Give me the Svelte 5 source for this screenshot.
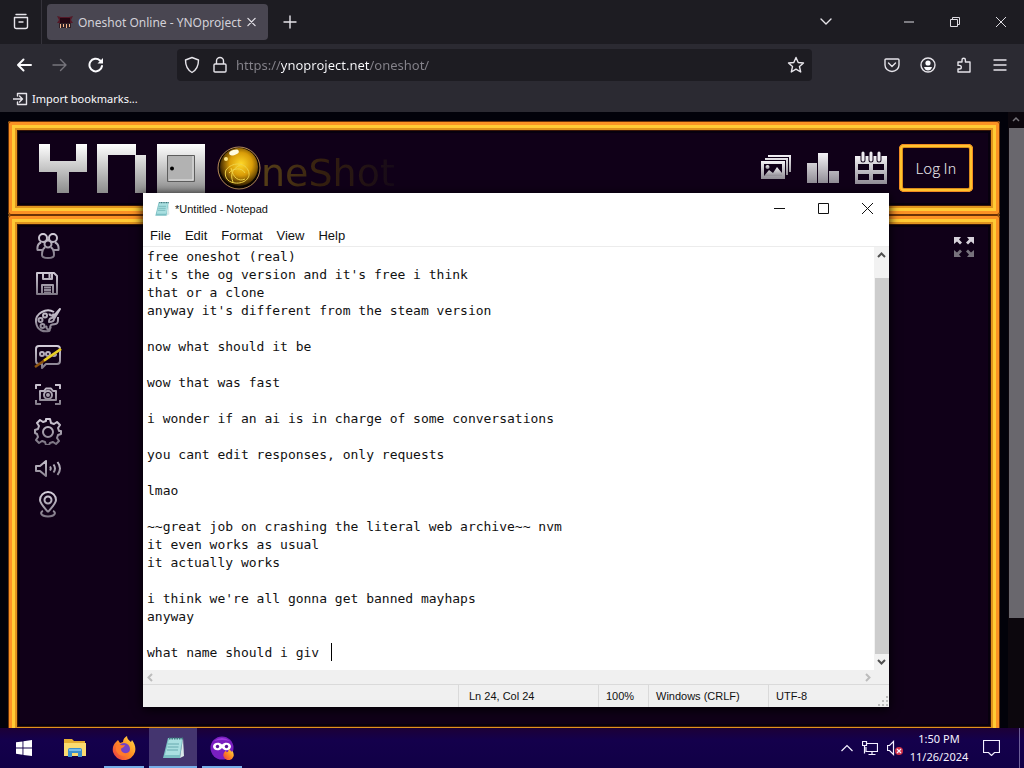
<script>
  const lines = [
    'free oneshot (real)',
    "it's the og version and it's free i think",
    'that or a clone',
    "anyway it's different from the steam version",
    '',
    'now what should it be',
    '',
    'wow that was fast',
    '',
    'i wonder if an ai is in charge of some conversations',
    '',
    'you cant edit responses, only requests',
    '',
    'lmao',
    '',
    '~~great job on crashing the literal web archive~~ nvm',
    'it even works as usual',
    'it actually works',
    '',
    "i think we're all gonna get banned mayhaps",
    'anyway',
    '',
    'what name should i giv '
  ];
  let note = $state(lines.join('\n'));
  let url = $state('https://ynoproject.net/oneshot/');

  const menus = ['File', 'Edit', 'Format', 'View', 'Help'];
  const status = ['', 'Ln 24, Col 24', '100%', 'Windows (CRLF)', 'UTF-8'];

  const tools = [
    {
      name: 'Players',
      d: 'M5 6a4 4 0 1 0 8 0a4 4 0 1 0-8 0M15 6a4 4 0 1 0 8 0a4 4 0 1 0-8 0M10.500 12a3.500 3.500 0 1 0 7 0a3.500 3.500 0 1 0-7 0M8 18H3.500C3 14 4.500 11.500 7 10.500M20 18h4.500C25 14 23.500 11.500 21 10.500M11 15.500C8 17 8 20 8 23q0 3 6 3t6-3c0-3 0-6-3-7.500'
    },
    {
      name: 'Save',
      d: 'M3 4h17l3 3v18H3zM9 4v6h9V4M15.500 5v4M8 25v-9h11v9M10 18.500h7M10 21h7M10 23.500h7'
    },
    {
      name: 'Palette',
      d: 'M20 6C12 1 1 8 2 16c1 9 8 10 13 9c2-1 0-4 2-6c3-2 7 1 7-5V11M26 3l-8 9c-2 0-3 2-3 4c3 0 5-1 5-3zM9 9.500a2 2 0 1 0 4 0a2 2 0 1 0-4 0M15.500 7.500a2 2 0 1 0 4 0M4.500 14a2 2 0 1 0 4 0a2 2 0 1 0-4 0M6.500 20a2 2 0 1 0 4 0a2 2 0 1 0-4 0M13 20a2 2 0 1 0 3 0'
    },
    {
      name: 'Chat',
      d: 'M5 3h18q3 0 3 3v12q0 3-3 3H12l-4 4v-4H5q-3 0-3-3V6q0-3 3-3M6 11a2 2 0 1 0 4 0a2 2 0 1 0-4 0M12 11a2 2 0 1 0 4 0a2 2 0 1 0-4 0M18 11a2 2 0 1 0 4 0',
      slash: true
    },
    {
      name: 'Screenshot',
      d: 'M2 9V5h5M21 5h5v4M2 20v4h5M21 24h5v-4M6 20V11h4l2-2.500h5L19 11h3v9zM10 15a4 4 0 1 0 8 0a4 4 0 1 0-8 0M13 15a1 1 0 1 0 2 0a1 1 0 1 0-2 0'
    },
    {
      name: 'Settings',
      d: 'M12 2h4l1 4 3 1 3-2 3 3-2 3 1 3 2 0v3l-3 1-1 3 2 3-3 3-3-2-3 1-1 2h-3l-1-3-3-1-3 2-3-3 2-3-1-3-2-1v-3l3-1 1-3-2-3 3-3 3 2 3-1zM9 15a5 5 0 1 0 10 0a5 5 0 1 0-10 0'
    },
    {
      name: 'Sound',
      d: 'M2 12h4l6-5v15l-6-5H2zM16 12.500q1.500 2 0 4M19.500 10.500q3 4 0 8M23.500 8q5 6.500 0 13'
    },
    {
      name: 'Locations',
      d: 'M14 21C8 14 6 12 6 9a8 8 0 0 1 16 0c0 3-2 5-8 12M10.500 9a3.500 3.500 0 1 0 7 0a3.500 3.500 0 1 0-7 0M9 20c-3 1-3 5 5 5.500c8-.5 8-4.500 5-5.500'
    }
  ];
</script>

<svg class="defs" aria-hidden="true">
  <defs>
    <linearGradient id="silver" x1="0" y1="0" x2="0" y2="1">
      <stop offset="0" stop-color="#f4f2f6" />
      <stop offset="1" stop-color="#918d96" />
    </linearGradient>
    <linearGradient id="toolGrad" gradientUnits="userSpaceOnUse" x1="0" y1="0" x2="0" y2="28">
      <stop offset="0" stop-color="#dcd6e2" />
      <stop offset="1" stop-color="#77707e" />
    </linearGradient>
    <linearGradient id="logoGrad" gradientUnits="userSpaceOnUse" x1="0" y1="0" x2="0" y2="49">
      <stop offset="0" stop-color="#ffffff" />
      <stop offset="1" stop-color="#8c8c8c" />
    </linearGradient>
    <radialGradient id="orb" cx=".55" cy=".42" r=".6">
      <stop offset="0" stop-color="#ffd92a" />
      <stop offset=".5" stop-color="#d99c08" />
      <stop offset="1" stop-color="#241300" />
    </radialGradient>
    <linearGradient id="fire" x1="1" y1="0" x2="0" y2="1">
      <stop offset="0" stop-color="#ffe34a" />
      <stop offset=".5" stop-color="#ff8c20" />
      <stop offset="1" stop-color="#e8304c" />
    </linearGradient>
  </defs>
</svg>

{#snippet pad(size)}
  <svg width={size} height={size} viewBox="0 0 24 24" aria-hidden="true">
    <path d="M7 2h15l-3 20H2z" fill="#7cc0c4" />
    <path d="M8 3h13l-2.500 16H4z" fill="#a9dfe0" />
    <path d="M7 8h11M6.500 11h11M6 14h11" stroke="#67a9ae" fill="none" />
    <path d="M22 2l1 18-4 2z" fill="#d8e8e8" />
    <path d="M8 2.500h14" stroke="#40777c" stroke-width="2" stroke-dasharray="1.500 1" />
  </svg>
{/snippet}

{#snippet firefox(size)}
  <svg width={size} height={size} viewBox="0 0 24 24" aria-hidden="true">
    <path d="M6 4l2 3 3-1c0-3 2-5 4-6 0 3 2 4 4 6l1-2c3 4 4 8 3 12a11.500 11.500 0 0 1-22 0C0 11 2 8 4 6z" fill="url(#fire)" />
    <circle cx="12" cy="13" r="6" fill="#7442c8" />
    <path d="M4 10c3-3 5 0 9-1-1 3-3 2-4 4 0 4 5 6 9 2-1 6-12 7-14-1z" fill="#ff7a2c" />
  </svg>
{/snippet}

<div class="desktop">
  <main class="browser">
    <div class="tabs">
      <button class="view" aria-label="Firefox View">
        <svg width="18" height="18" viewBox="0 0 18 18" class="line"><path d="M4 1.500h10M2.500 4.500h13v9q0 2-2 2h-9q-2 0-2-2zM7 9h4" /></svg>
      </button>
      <div class="tab">
        <svg width="16" height="16" viewBox="0 0 16 16" aria-hidden="true">
          <path d="M0 2l4 1h8l4-1-2 4 2 3H0l2-3z" fill="#541827" />
          <path d="M3 4h10v5H3z" fill="#240712" />
          <path d="M2 9h12v5H2z" fill="#302026" />
          <path d="M3 10h1v4H3zM6 10h1v3H6zM9 10h1v4H9zM12 10h1v3h-1z" fill="#f4b68b" />
        </svg>
        <span class="tab-title">Oneshot Online - YNOproject</span>
        <button class="close" aria-label="Close tab">
          <svg width="10" height="10" viewBox="0 0 10 10" class="line"><path d="M1 1l8 8M9 1l-8 8" /></svg>
        </button>
      </div>
      <button class="new" aria-label="New tab">
        <svg width="14" height="14" viewBox="0 0 14 14" class="line"><path d="M7 1v12M1 7h12" /></svg>
      </button>
      <button class="all" aria-label="List all tabs">
        <svg width="12" height="8" viewBox="0 0 12 8" class="line"><path d="M1 1l5 5 5-5" /></svg>
      </button>
      <div class="winctl">
        <button aria-label="Minimize"><svg width="10" height="10" viewBox="0 0 10 10" class="thin"><path d="M0 5h10" /></svg></button>
        <button aria-label="Restore"><svg width="10" height="10" viewBox="0 0 10 10" class="thin"><path d="M.5 2.500h7v7h-7zM2.500 2.500v-2h7v7h-2" /></svg></button>
        <button aria-label="Close"><svg width="10" height="10" viewBox="0 0 10 10" class="thin"><path d="M0 0l10 10M10 0L0 10" /></svg></button>
      </div>
    </div>

    <div class="nav">
      <div class="history">
        <button aria-label="Back"><svg width="16" height="16" viewBox="0 0 16 16" class="line bold"><path d="M15 8H2M7.500 2.500L2 8l5.500 5.500" /></svg></button>
        <button aria-label="Forward" disabled><svg width="16" height="16" viewBox="0 0 16 16" class="line"><path d="M1 8h13M8.500 2.500L14 8l-5.500 5.500" /></svg></button>
        <button aria-label="Reload"><svg width="16" height="16" viewBox="0 0 16 16" class="line bold"><path d="M14 9a6.300 6.300 0 1 1-2-5.600L14 5" /><path d="M15 1v5.500H9.500z" fill="#fbfbfe" stroke="none" /></svg></button>
      </div>
      <div class="urlbar">
        <svg width="16" height="18" viewBox="0 0 16 18" class="line shield"><path d="M8 1.500l6.500 2.500c0 6-2 10-6.500 12.500C3.500 14 1.500 10 1.500 4z" /></svg>
        <svg width="14" height="18" viewBox="0 0 14 18" class="line"><path d="M2 8h10q1 0 1 1v6q0 1-1 1H2q-1 0-1-1V9q0-1 1-1M3.500 8V5a3.500 3.500 0 0 1 7 0v3" /></svg>
        <input aria-label="Address" bind:value={url} spellcheck="false" />
        <button aria-label="Bookmark this page"><svg width="18" height="18" viewBox="0 0 18 18" class="line"><path d="M9 1.500l2.200 5 5.300.5-4 3.600 1.200 5.400L9 13.200 4.300 16l1.200-5.400-4-3.600 5.300-.5z" /></svg></button>
      </div>
      <div class="actions">
        <button aria-label="Pocket"><svg width="16" height="16" viewBox="0 0 16 16" class="line"><path d="M2 2h12q1 0 1 1v5a7 6.500 0 0 1-14 0V3q0-1 1-1M4.500 6L8 9.500 11.500 6" /></svg></button>
        <button aria-label="Account"><svg width="16" height="16" viewBox="0 0 16 16" class="line"><circle cx="8" cy="8" r="7" /><circle cx="8" cy="6" r="2.600" fill="#fbfbfe" stroke="none" /><path d="M4 10h8q-1 3.500-4 3.500T4 10" fill="#fbfbfe" stroke="none" /></svg></button>
        <button aria-label="Extensions"><svg width="16" height="16" viewBox="0 0 16 16" class="line"><path d="M2 5h4V3a1.700 1.700 0 0 1 3.400 0v2H14v10H2v-3h1.500a1.800 1.800 0 0 0 0-3.600H2z" /></svg></button>
        <button aria-label="Application menu"><svg width="14" height="14" viewBox="0 0 14 14" class="line"><path d="M1 2h12M1 7h12M1 12h12" /></svg></button>
      </div>
    </div>

    <div class="bookmarks">
      <button>
        <svg width="15" height="14" viewBox="0 0 15 14" class="line"><path d="M4.500 4V1.500h9v11h-9V10M0 7h9M6.500 4L9.500 7l-3 3" /></svg>
        Import bookmarks...
      </button>
    </div>

    <div class="page">
      <div class="site">
        <header class="frame top">
          <a class="logo" href="#home" aria-label="YNOproject">
            <svg width="168" height="49" viewBox="0 0 168 49" fill="url(#logoGrad)">
              <path d="M1 0h11v17h26V0h11v28H31v21H19V28H1z" />
              <path d="M59 0h39v11H70v38H59zM97 11h11v38H97z" />
              <path d="M119 0h48v49h-48z" />
              <path d="M129.500 11.500h27v26h-27z" fill="#b2b2b2" stroke="#5d5d5d" />
              <path d="M155 12v24h-24" fill="none" stroke="#e4e4e4" />
              <circle cx="134" cy="24.500" r="2" fill="#000" />
            </svg>
          </a>
          <div class="game">
            <svg width="44" height="44" viewBox="0 0 44 44" aria-hidden="true">
              <circle cx="22" cy="22" r="21" fill="#0b0500" stroke="#b68a5a" />
              <circle cx="22" cy="21" r="19" fill="url(#orb)" />
              <path d="M9 24c6-8 18-8 22 0s-4 14-13 13S7 29 9 24M12 27c4-5 13-6 16 0M14 22c2 10 8 14 14 11M23 19c-8 4-10 10-7 17" fill="none" stroke="#f0d348" />
              <ellipse cx="17" cy="6.500" rx="5" ry="2.500" fill="#fffbe0" transform="rotate(-18 17 6.500)" />
              <circle cx="9" cy="13" r="2" fill="#ffe98a" />
            </svg>
            <span>neShot</span>
          </div>
          <nav class="links">
            <a href="#gallery" aria-label="Gallery">
              <svg width="32" height="32" viewBox="0 0 32 32" fill="url(#silver)">
                <path d="M8 3h23v17h-2V5H8zM5 6h23v17h-2V8H5z" />
                <path fill-rule="evenodd" d="M1 9h24v18H1zM4 12v12h18V12z" />
                <path d="M4 24l5-6 4 3 4-6 5 6v3z" />
                <circle cx="7.500" cy="15" r="2" />
              </svg>
            </a>
            <a href="#rankings" aria-label="Rankings">
              <svg width="34" height="32" viewBox="0 0 34 32" fill="url(#silver)">
                <path d="M1 11h10v20H1zM12 1h10v30H12zM23 19h10v12H23z" />
              </svg>
            </a>
            <a href="#schedule" aria-label="Schedules">
              <svg width="34" height="36" viewBox="0 0 34 36" fill="url(#silver)">
                <path fill-rule="evenodd" d="M1 6h32v28H1zM4 14v6h11v-6zM19 14v6h11v-6zM4 24v6h11v-6zM19 24v6h11v-6z" />
                <path d="M9 3v7M17 3v7M25 3v7" stroke="#100018" stroke-width="5" stroke-linecap="round" />
                <path d="M9 3v7M17 3v7M25 3v7" stroke="#eeebf0" stroke-width="3" stroke-linecap="round" />
              </svg>
            </a>
            <button class="login">Log In</button>
          </nav>
        </header>

        <section class="frame play">
          <div class="tools">
            {#each tools as tool}
              <button aria-label={tool.name}>
                <svg width="28" height="28" viewBox="0 0 28 28">
                  <path d={tool.d} fill="none" stroke="url(#toolGrad)" stroke-width="2" stroke-linejoin="round" />
                  {#if tool.slash}
                    <path d="M1 24L27 6" stroke="#8d5310" stroke-width="2.500" />
                    <path d="M10 17.500L27 6" stroke="#e6cf25" stroke-width="2.500" />
                  {/if}
                </svg>
              </button>
            {/each}
          </div>
          <button class="full" aria-label="Fullscreen">
            <svg width="22" height="22" viewBox="0 0 22 22">
              <path d="M1 1h7L6 3.500 9 6.500 7 8.500 4 5.500 1 8zM21 1h-7l2 2.500-3 3 2 2 3-3L21 8z" fill="#d6d1da" />
              <path d="M1 21h7l-2-2.500 3-3-2-2-3 3L1 14zM21 21h-7l2-2.500-3-3 2-2 3 3 3-2.500z" fill="#77727c" />
            </svg>
          </button>
        </section>
      </div>
      <div class="pagescroll">
        <svg width="8" height="16" viewBox="0 0 8 16" fill="none" stroke="#77747a" stroke-width="1.500"><path d="M1 9l3-3 3 3" /></svg>
        <div class="thumb"></div>
      </div>
    </div>
  </main>

  <section class="notepad" aria-label="Untitled - Notepad">
    <div class="titlebar">
      {@render pad(16)}
      <span>*Untitled - Notepad</span>
      <div class="padctl">
        <button aria-label="Minimize"><svg width="11" height="11" viewBox="0 0 11 11"><path d="M0 5.500h11" /></svg></button>
        <button aria-label="Maximize"><svg width="11" height="11" viewBox="0 0 11 11"><path d="M.5.500h10v10H.5z" /></svg></button>
        <button aria-label="Close"><svg width="11" height="11" viewBox="0 0 11 11"><path d="M0 0l11 11M11 0L0 11" /></svg></button>
      </div>
    </div>
    <div class="menubar">
      {#each menus as menu}<button>{menu}</button>{/each}
    </div>
    <div class="editor">
      <textarea aria-label="Text editor" bind:value={note} spellcheck="false" wrap="off"></textarea>
      <span class="caret"></span>
      <div class="vscroll">
        <svg width="9" height="16" viewBox="0 0 9 16"><path d="M1 10l3.500-3.500L8 10" /></svg>
        <div class="vthumb"></div>
        <svg width="9" height="16" viewBox="0 0 9 16"><path d="M1 6l3.500 3.500L8 6" /></svg>
      </div>
    </div>
    <div class="hscroll">
      <svg width="6" height="9" viewBox="0 0 6 9"><path d="M5 1L1.500 4.500 5 8" /></svg>
      <svg width="6" height="9" viewBox="0 0 6 9"><path d="M1 1l3.500 3.500L1 8" /></svg>
    </div>
    <div class="status">
      {#each status as cell}<span>{cell}</span>{/each}
      <svg class="grip" width="10" height="10" viewBox="0 0 10 10" fill="#bdbdbd" aria-hidden="true"><path d="M8 0h2v2H8zM8 4h2v2H8zM8 8h2v2H8zM4 4h2v2H4zM4 8h2v2H4zM0 8h2v2H0z" /></svg>
    </div>
  </section>

  <footer class="taskbar">
    <button class="start" aria-label="Start">
      <svg width="16" height="16" viewBox="0 0 16 16" fill="#fff"><path d="M0 2.300L6.500 1.400V7.600H0zM7.400 1.200L16 0V7.600H7.400zM0 8.500H6.500V14.700L0 13.800zM7.400 8.500H16V16L7.400 14.900z" /></svg>
    </button>
    <div class="apps">
      <button aria-label="File Explorer">
        <svg width="24" height="24" viewBox="0 0 24 24">
          <path d="M1 3h8l2 2h11v15H1z" fill="#e5ae32" />
          <path d="M1 7h22v13H1z" fill="#fbdc70" />
          <path d="M5 21v-7q0-2 2-2h10q2 0 2 2v7h-4v-4H9v4z" fill="#3b8fcb" />
          <path d="M6 13h12v2H6z" fill="#78bde8" />
        </svg>
      </button>
      <button class="open" aria-label="Firefox">{@render firefox(24)}</button>
      <button class="open active" aria-label="Notepad">{@render pad(24)}</button>
      <button class="open" aria-label="Firefox Private Browsing">
        <svg width="24" height="24" viewBox="0 0 24 24">
          <circle cx="12" cy="12" r="11.500" fill="#7a1fc0" />
          <path d="M4 5q8-6 16 0-8-2-16 0" fill="#a03be0" />
          <path d="M12 8.500c-3-3-9-2-9 2s6 5.500 9 1.500c3 4 9 2.500 9-1.500s-6-5-9-2" fill="#fff" />
          <circle cx="7.500" cy="10.500" r="1.700" fill="#5a1699" /><circle cx="16.500" cy="10.500" r="1.700" fill="#5a1699" />
          <g transform="translate(13 13) scale(.46)">
            <path d="M6 4l2 3 3-1c0-3 2-5 4-6 0 3 2 4 4 6l1-2c3 4 4 8 3 12a11.500 11.500 0 0 1-22 0C0 11 2 8 4 6z" fill="url(#fire)" />
          </g>
        </svg>
      </button>
    </div>
    <div class="tray">
      <button aria-label="Show hidden icons"><svg width="12" height="8" viewBox="0 0 12 8" class="sys"><path d="M.5 7L6 1.500 11.500 7" /></svg></button>
      <button aria-label="Network"><svg width="16" height="14" viewBox="0 0 16 14" class="sys"><path d="M5 2.500h10.500v8H4V6M.5.500h4v4h-4zM2.500 4.500v8M10 11v2.500M6.500 13.500h7" /></svg></button>
      <button aria-label="Volume muted"><svg width="16" height="16" viewBox="0 0 16 16" class="sys"><path d="M.5 5.500h2l4-4v13l-4-4h-2z" /><circle cx="12" cy="11" r="4" fill="#d03048" stroke="none" /><path d="M10 9l4 4M14 9l-4 4" /></svg></button>
    </div>
    <time class="clock"><span>1:50 PM</span><span>11/26/2024</span></time>
    <button class="notices" aria-label="Notifications"><svg width="17" height="16" viewBox="0 0 17 16" class="sys"><path d="M.5.500h16v12h-5l-3 3-3-3h-5z" /></svg></button>
    <button class="peek" aria-label="Show desktop"></button>
  </footer>
</div>

<style>
  :global(body) { background: #02020a; overflow: hidden; }
  .defs { position: absolute; width: 0; height: 0; }
  button { border: 0; padding: 0; margin: 0; background: none; color: inherit; font: inherit; display: grid; place-items: center; }
  svg { display: block; flex: none; }
  .line { fill: none; stroke: #e6e4ea; stroke-width: 1.400; stroke-linejoin: round; stroke-linecap: round; }
  .bold { stroke: #fbfbfe; stroke-width: 2; }
  .thin { fill: none; stroke: #dedce2; stroke-width: 1; }
  .sys { fill: none; stroke: #f4f0ff; stroke-width: 1.200; }

  .desktop { position: relative; height: 100vh; display: flex; flex-direction: column; }
  .browser { flex: 1; min-height: 0; display: flex; flex-direction: column; font-family: "Noto Sans", sans-serif; font-size: 11px; color: #fbfbfe; }

  .tabs { display: flex; align-items: stretch; height: 44px; background: #1d1c22; }
  .view { width: 42px; border-right: 1px solid #35333b; }
  .tab { display: flex; align-items: center; gap: 5px; width: 221px; box-sizing: border-box; margin: 4px 0 4px 5px; padding: 0 6px 0 10px; border-radius: 4px; background: #494651; }
  .tab-title { flex: 1; min-width: 0; font-size: 12px; color: #d3d1d8; white-space: nowrap; }
  .close { width: 22px; height: 22px; margin-left: -8px; }
  .close svg { width: 9px; }
  .new { width: 44px; }
  .all { width: 40px; margin-left: auto; margin-right: 40px; }
  .winctl { display: flex; }
  .winctl button { width: 46px; }

  .nav { display: flex; align-items: center; height: 41px; background: #2b2a32; }
  .history { display: flex; padding-left: 6px; width: 171px; box-sizing: border-box; }
  .history button { width: 36px; height: 36px; }
  .history button:disabled { opacity: .4; }
  .urlbar { flex: 1; display: flex; align-items: center; gap: 9px; height: 32px; margin-left: 6px; padding: 0 7px; border-radius: 4px; background: #1d1c22; }
  .shield { margin-right: 4px; }
  .urlbar input { flex: 1; min-width: 0; border: 0; padding: 0; outline: 0; font: 13px/20px "Noto Sans", sans-serif; color: transparent; background: linear-gradient(90deg, #85838b 45px, #fbfbfe 45px 134px, #85838b 134px); background-clip: text; -webkit-background-clip: text; }
  .actions { display: flex; width: 212px; box-sizing: border-box; justify-content: flex-end; padding-right: 6px; }
  .actions button { width: 36px; height: 36px; }

  .bookmarks { height: 27px; background: #2b2a32; padding-left: 13px; display: flex; }
  .bookmarks button { display: flex; align-items: center; gap: 4px; }

  .page { flex: 1; min-height: 0; display: flex; overflow: hidden; background: #02020a; }
  .site { flex: 1; min-width: 0; display: flex; flex-direction: column; margin: 9px 8px 0 8px; }
  .frame {
    border-radius: 3px; background: #100018;
    box-shadow: inset 0 0 0 1px #6a3208, inset 0 0 0 4px #fb9224, inset 0 0 0 7px #ffca34, inset 0 0 0 9px #e0941e, inset 0 0 0 10px #3a1608, inset 0 0 0 12px #07000e;
  }
  .top { display: flex; align-items: center; height: 94px; padding: 0 27px 0 30px; box-sizing: border-box; }
  .play { flex: 1; display: flex; justify-content: space-between; align-items: flex-start; padding: 17px 25px 0 26px; margin-bottom: -8px; }
  .game { display: flex; align-items: center; margin-left: 11px; }
  .game span { margin-top: 10px; font: 38px/40px "DejaVu Sans", sans-serif; color: transparent; background: linear-gradient(90deg, #574018, #35200f 45%, #160a18); background-clip: text; -webkit-background-clip: text; }
  .links { display: flex; align-items: center; gap: 14px; margin-left: auto; }
  .login { width: 74px; height: 48px; margin-left: -3px; border-radius: 5px; font: 300 15px/20px "Noto Sans CJK JP", sans-serif; color: #e9e6ec; box-shadow: inset 0 0 0 1px #f08a22, inset 0 0 0 3px #ffc42e, inset 0 0 0 4px #d98a1c; }
  .tools { display: grid; gap: 9px; }
  .full { margin-top: 4px; }
  .pagescroll { width: 16px; display: flex; flex-direction: column; align-items: center; background: #0c070d; }
  .pagescroll .thumb { width: 15px; height: 82%; max-height: 490px; background: #69676d; }

  .notepad { position: absolute; left: 143px; right: 135px; top: 193px; bottom: 61px; display: flex; flex-direction: column; background: #fff; color: #111; font-family: "Liberation Sans", Arial, sans-serif; font-size: 11px; box-shadow: 0 2px 10px #000; }
  .titlebar { display: flex; align-items: center; gap: 5px; height: 31px; padding-left: 11px; }
  .padctl { display: flex; align-self: stretch; margin-left: auto; }
  .padctl button { width: 44px; }
  .padctl svg { fill: none; stroke: #111; stroke-width: 1; }
  .menubar { display: flex; gap: 14px; height: 22px; padding: 0 7px; border-bottom: 1px solid #ececec; font-size: 13px; }
  .editor { position: relative; flex: 1; min-height: 0; display: flex; }
  .editor textarea { flex: 1; min-width: 0; border: 0; padding: 1px 4px 0; margin: 0; outline: 0; resize: none; overflow: hidden; background: #fff; color: #111; font: 13px/18px "DejaVu Sans Mono", monospace; }
  .caret { position: absolute; left: 188px; top: 396px; width: 1px; height: 18px; background: #000; }
  .vscroll { width: 15px; display: flex; flex-direction: column; align-items: center; background: #f2f2f2; }
  .vscroll svg, .hscroll svg { fill: none; stroke: #505050; stroke-width: 2; }
  .vscroll svg:first-child { margin-bottom: 15px; }
  .vthumb { flex: 1; width: 14px; background: #cdcdcd; }
  .hscroll { display: flex; align-items: center; justify-content: space-between; height: 14px; padding: 0 18px 0 4px; background: #f0f0f0; }
  .hscroll svg { stroke: #bcbcbc; }
  .status { position: relative; display: grid; grid-template-columns: 1fr 140px 50px 120px 121px; height: 22px; border-top: 1px solid #dadada; background: #f0f0f0; line-height: 22px; }
  .status span { padding-left: 7px; border-left: 1px solid #dadada; white-space: nowrap; }
  .status span:first-child { border-left: 0; }
  .status span:nth-child(2) { padding-left: 10px; }
  .grip { position: absolute; right: 1px; bottom: 1px; }

  .taskbar { display: flex; height: 40px; color: #f6f2ff; font-family: "Noto Sans", sans-serif; font-size: 11px; background: linear-gradient(#1c0036, #14004c 30%, #110046); }
  .start { width: 48px; }
  .apps { display: flex; gap: 1px; margin-left: 3px; }
  .apps button { width: 48px; }
  .open { background: linear-gradient(#77aee8, #77aee8) no-repeat center bottom / 40px 2px; }
  .apps .active { background-color: #44356f; background-size: 48px 2px; }
  .tray { display: flex; align-items: center; gap: 9px; margin-left: auto; }
  .clock { display: flex; flex-direction: column; justify-content: center; width: 72px; text-align: center; line-height: 18px; }
  .notices { width: 32px; }
  .peek { width: 5px; margin-left: 12px; border-left: 1px solid #6d5f98; }
</style>
